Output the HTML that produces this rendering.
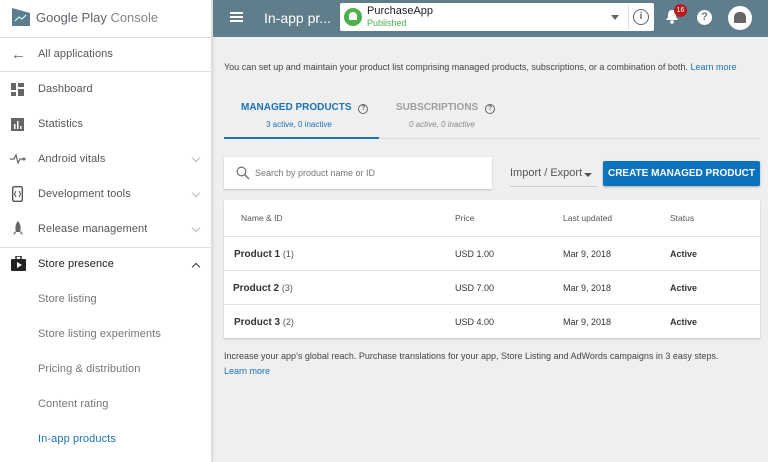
<!DOCTYPE html>
<html><head><meta charset="utf-8"><style>
*{margin:0;padding:0;box-sizing:border-box}
body{width:768px;height:462px;overflow:hidden;font-family:"Liberation Sans",sans-serif;background:#efefef;position:relative;color:#212121}
.a{position:absolute;white-space:nowrap}
#side{position:absolute;left:0;top:0;width:212px;height:462px;background:#fff;border-right:1px solid #ddd;box-shadow:1px 0 3px rgba(0,0,0,.12)}
.it{position:absolute;left:38px;font-size:11px;color:#555;letter-spacing:.1px}
.sub{color:#757575}
.hr{position:absolute;left:0;width:212px;height:1px;background:#e0e0e0}
.chev{position:absolute;left:193px;width:6px;height:6px;border-right:1px solid #bbb;border-bottom:1px solid #bbb;transform:rotate(45deg)}
#top{position:absolute;left:213px;top:0;width:555px;height:37px;background:#607d8b}
.m{font-size:9px;color:#444}
.row{position:absolute;left:224px;width:536px;height:34px;border-top:1px solid #e4e4e4}
.c{position:absolute;top:0;line-height:34px;font-size:9px;color:#333}
</style></head><body>
<div id="side">
<svg class="a" style="left:11px;top:7px" width="20" height="20" viewBox="0 0 20 20"><path d="M1 1 L19 6 L19 19 L1 19Z" fill="#5d7c8e"/><path d="M4 14 L8 10 L11 12 L15 8" stroke="#cfe" stroke-width="1.2" fill="none"/></svg>
<div class="a" style="left:36px;top:10px;font-size:13px;color:#5f6368">Google Play <span style="color:#80868b">Console</span></div>
<div class="hr" style="top:37px"></div>
<div class="a" style="left:11px;top:46px;font-size:15px;color:#666">&#8592;</div>
<div class="it" style="top:48px">All applications</div>
<div class="hr" style="top:71px"></div>
<svg class="a" style="left:11px;top:83px" width="13" height="13"><rect x="0" y="0" width="5" height="7" fill="#666"/><rect x="7" y="0" width="6" height="4" fill="#666"/><rect x="7" y="6" width="6" height="7" fill="#666"/><rect x="0" y="9" width="5" height="4" fill="#666"/></svg>
<div class="it" style="top:83px">Dashboard</div>
<svg class="a" style="left:11px;top:118px" width="13" height="13"><rect width="13" height="13" fill="#666"/><rect x="3" y="6" width="1.5" height="5" fill="#fff"/><rect x="6" y="3" width="1.5" height="8" fill="#fff"/><rect x="9" y="8" width="1.5" height="3" fill="#fff"/></svg>
<div class="it" style="top:118px">Statistics</div>
<svg class="a" style="left:10px;top:153px" width="16" height="12"><path d="M0 6 H4 L6 2 L8 10 L10 6 H13" stroke="#666" fill="none" stroke-width="1.2"/><circle cx="14" cy="6" r="1.5" fill="#666"/></svg>
<div class="it" style="top:153px">Android vitals</div><div class="chev" style="top:155px"></div>
<svg class="a" style="left:12px;top:186px" width="11" height="16"><rect x=".7" y=".7" width="9.6" height="14.6" rx="1.5" stroke="#555" fill="none" stroke-width="1.4"/><path d="M4 5 L2.5 8 L4 11 M7 5 L8.5 8 L7 11" stroke="#555" fill="none"/></svg>
<div class="it" style="top:188px">Development tools</div><div class="chev" style="top:190px"></div>
<svg class="a" style="left:13px;top:221px" width="10" height="15"><path d="M5 0 C8 3 8 8 7 11 H3 C2 8 2 3 5 0Z" fill="#666"/><path d="M2 10 L0 14 L3 12Z M8 10 L10 14 L7 12Z" fill="#666"/></svg>
<div class="it" style="top:223px">Release management</div><div class="chev" style="top:225px"></div>
<div class="hr" style="top:247px"></div>
<svg class="a" style="left:11px;top:256px" width="15" height="15"><rect x="0" y="3" width="15" height="12" rx="1" fill="#222"/><rect x="5" y="0" width="5" height="4" fill="none" stroke="#222" stroke-width="1.4"/><path d="M6 6 L11 9 L6 12Z" fill="#fff"/></svg>
<div class="it" style="top:258px;color:#222">Store presence</div>
<div class="chev" style="top:264px;transform:rotate(-135deg);border-color:#333"></div>
<div class="it sub" style="top:293px">Store listing</div>
<div class="it sub" style="top:328px">Store listing experiments</div>
<div class="it sub" style="top:363px">Pricing &amp; distribution</div>
<div class="it sub" style="top:398px">Content rating</div>
<div class="it" style="top:433px;color:#1a73b8">In-app products</div>
</div>
<div id="top">
<div class="a" style="left:17px;top:12px;width:13px;height:2px;background:#fff;box-shadow:0 4px 0 #fff,0 8px 0 #fff"></div>
<div class="a" style="left:51px;top:10px;font-size:14px;color:#fff">In-app pr...</div>
<div class="a" style="left:127px;top:3px;width:314px;height:28px;background:#fff;border-radius:2px"></div>
<div class="a" style="left:131px;top:8px;width:18px;height:18px;border-radius:50%;background:#4caf50"></div>
<div class="a" style="left:136px;top:12px;width:8px;height:8px;background:#fff;border-radius:4px 4px 1px 1px"></div>
<div class="a" style="left:154px;top:5px;font-size:11px;color:#222">PurchaseApp</div>
<div class="a" style="left:154px;top:18px;font-size:9px;color:#4caf50">Published</div>
<div class="a" style="left:398px;top:15px;border:4px solid transparent;border-top:5px solid #666;border-bottom:0"></div>
<div class="a" style="left:415px;top:5px;width:1px;height:24px;background:#ddd"></div>
<div class="a" style="left:420px;top:9px;width:16px;height:16px;border:1.3px solid #666;border-radius:50%;font-size:10px;line-height:14px;text-align:center;color:#666;font-weight:bold">i</div>
<svg class="a" style="left:452px;top:9px" width="14" height="16"><path d="M7 1 C3 1 3 5 3 8 L1 11 H13 L11 8 C11 5 11 1 7 1Z" fill="#fff"/><circle cx="7" cy="13" r="1.8" fill="#fff"/></svg>
<div class="a" style="left:461px;top:4px;width:13px;height:13px;border-radius:50%;background:#b71c1c;font-size:7px;color:#fff;text-align:center;line-height:13px">16</div>
<div class="a" style="left:484px;top:10px;width:15px;height:15px;border-radius:50%;background:#fff;color:#607d8b;font-size:11px;font-weight:bold;text-align:center;line-height:15px">?</div>
<div class="a" style="left:515px;top:6px;width:24px;height:24px;border-radius:50%;background:#fff"></div>
<div class="a" style="left:521px;top:12px;width:12px;height:11px;background:#666;border-radius:5px 5px 1px 1px"></div>
</div>
<div class="a m" style="left:224px;top:62px">You can set up and maintain your product list comprising managed products, subscriptions, or a combination of both. <span style="color:#1a73b8">Learn more</span></div>
<div class="a" style="left:241px;top:102px;font-size:10px;color:#1a73b8;font-weight:bold">MANAGED PRODUCTS <span style="display:inline-block;width:10px;height:10px;border:1px solid #666;border-radius:50%;font-size:7px;line-height:8px;text-align:center;color:#666;margin-left:4px">?</span></div>
<div class="a" style="left:266px;top:120px;font-size:8px;color:#1a73b8">3 active, 0 inactive</div>
<div class="a" style="left:396px;top:102px;font-size:10px;color:#9e9e9e;font-weight:bold">SUBSCRIPTIONS <span style="display:inline-block;width:10px;height:10px;border:1px solid #666;border-radius:50%;font-size:7px;line-height:8px;text-align:center;color:#666;margin-left:4px">?</span></div>
<div class="a" style="left:409px;top:120px;font-size:8px;color:#888;font-style:italic">0 active, 0 inactive</div>
<div class="a" style="left:224px;top:138px;width:536px;height:1px;background:#ddd"></div>
<div class="a" style="left:224px;top:137px;width:155px;height:2px;background:#1a73b8"></div>
<div class="a" style="left:224px;top:157px;width:268px;height:32px;background:#fff;box-shadow:0 1px 2px rgba(0,0,0,.2)"></div>
<svg class="a" style="left:236px;top:166px" width="14" height="14"><circle cx="5.5" cy="5.5" r="4.3" stroke="#777" stroke-width="1.3" fill="none"/><path d="M8.7 8.7 L13 13" stroke="#777" stroke-width="1.5"/></svg>
<div class="a" style="left:255px;top:168px;font-size:9px;color:#777">Search by product name or ID</div>
<div class="a" style="left:510px;top:167px;font-size:11px;color:#555">Import / Export</div>
<div class="a" style="left:584px;top:173px;border:4px solid transparent;border-top:4px solid #555;border-bottom:0"></div>
<div class="a" style="left:510px;top:186px;width:87px;height:1px;background:#ccc"></div>
<div class="a" style="left:603px;top:161px;width:157px;height:25px;background:#0b72bd;border-radius:2px;box-shadow:0 1px 2px rgba(0,0,0,.3);color:#fff;font-size:10px;font-weight:bold;text-align:center;line-height:25px">CREATE MANAGED PRODUCT</div>
<div class="a" style="left:224px;top:200px;width:536px;height:138px;background:#fff;box-shadow:0 1px 2px rgba(0,0,0,.2)"></div>
<div class="row" style="top:200px;border-top:0;height:36px"><span class="c" style="left:17px;line-height:36px;font-size:8.5px;color:#555">Name &amp; ID</span><span class="c" style="left:231px;line-height:36px;font-size:8.5px;color:#555">Price</span><span class="c" style="left:339px;line-height:36px;font-size:8.5px;color:#555">Last updated</span><span class="c" style="left:446px;line-height:36px;font-size:8.5px;color:#555">Status</span></div>
<div class="row" style="top:236px"><span class="c" style="left:10px;font-size:10px"><b>Product 1</b> <span style="color:#555;font-size:9px">(1)</span></span><span class="c" style="left:231px">USD 1.00</span><span class="c" style="left:339px">Mar 9, 2018</span><span class="c" style="left:446px;font-weight:bold">Active</span></div>
<div class="row" style="top:270px"><span class="c" style="left:9px;font-size:10px"><b>Product 2</b> <span style="color:#555;font-size:9px">(3)</span></span><span class="c" style="left:231px">USD 7.00</span><span class="c" style="left:339px">Mar 9, 2018</span><span class="c" style="left:446px;font-weight:bold">Active</span></div>
<div class="row" style="top:304px"><span class="c" style="left:10px;font-size:10px"><b>Product 3</b> <span style="color:#555;font-size:9px">(2)</span></span><span class="c" style="left:231px">USD 4.00</span><span class="c" style="left:339px">Mar 9, 2018</span><span class="c" style="left:446px;font-weight:bold">Active</span></div>
<div class="a m" style="left:224px;top:351px">Increase your app’s global reach. Purchase translations for your app, Store Listing and AdWords campaigns in 3 easy steps.</div>
<div class="a m" style="left:224px;top:366px;color:#1a73b8">Learn more</div>
</body></html>
